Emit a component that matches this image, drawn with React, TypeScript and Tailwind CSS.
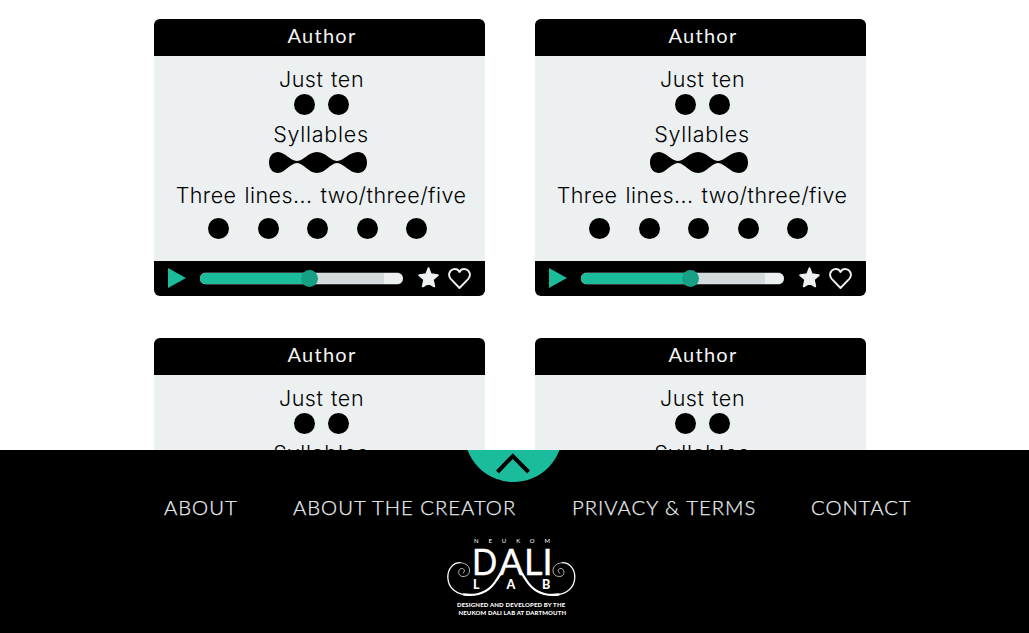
const cards = [0, 1, 2, 3];
const tiny = "absolute whitespace-nowrap leading-none";

function Dots({ count, gap }: { count: number; gap: string }) {
  return (
    <div className={`flex ${gap}`}>
      {Array.from({ length: count }, (_, i) => (
        <span key={i} className="size-[21px] rounded-full bg-black" />
      ))}
    </div>
  );
}

function Player() {
  return (
    <div className="flex h-[35px] items-start bg-black pl-[14px] pr-[13px]">
      <svg className="mt-[7px] h-5 w-[18px] shrink-0" viewBox="0 0 18 20" fill="#1abc9c">
        <path d="M0 0 18 10 0 20Z" />
      </svg>
      <div className="relative ml-[14px] mt-[12px] flex h-[11px] w-[203px] shrink-0 rounded-[6px] bg-[#ecf0f1] shadow-[0_1px_0_-0.5px_#777,0_-1px_0_-0.5px_#777]">
        <div className="w-[109px] rounded-l-[6px] bg-[#1abc9c]" />
        <div className="w-[75px] bg-[#d5dbdc]" />
        <span className="absolute -top-[3px] left-[101px] size-[17px] rounded-full bg-[#16a085]" />
      </div>
      <svg className="ml-[15px] mt-[6px] h-[21px] w-[21px] shrink-0" viewBox="0 0 21 21" fill="#ecf0f1" stroke="#ecf0f1" strokeWidth="2" strokeLinejoin="round">
        <path d="M10.500 1.300 12.800 7.300 19.700 8.200 14.700 12.500 16.200 19.300 10.500 15.800 4.800 19.300 6.300 12.500 1.300 8.200 8.200 7.300Z" />
      </svg>
      <svg className="ml-[9px] mt-[7px] h-[21px] w-[23px] shrink-0" viewBox="0 0 23 21" fill="none" stroke="#ecf0f1" strokeWidth="1.900" strokeLinejoin="round">
        <path d="M11.500 20 2.700 10.800C-.4 7.300 1.300 1.800 5.900 1.100 8.300.8 10.500 2 11.500 4 12.500 2 14.700.8 17.100 1.100 21.700 1.800 23.400 7.300 20.300 10.800Z" />
      </svg>
    </div>
  );
}

function Card() {
  return (
    <article className="h-[277px] overflow-hidden rounded-[6px] bg-[#ecf0f1]">
      <h2 className="flex h-[37px] items-center justify-center bg-black pb-[5px] pl-[5px] font-['Lato'] text-[20px] tracking-[1.25px] text-[#f5f5f5]">
        Author
      </h2>
      <div className="flex h-[205px] flex-col items-center pt-[11px] font-['Inter'] text-[21.5px] font-light leading-6 text-black">
        <p className="ml-[4px] tracking-[0.55px] [word-spacing:1px]">Just ten</p>
        <div className="ml-[4px] mt-[3px]"><Dots count={2} gap="gap-[13px]" /></div>
        <p className="ml-[3px] mt-[7px] tracking-[0.75px]">Syllables</p>
        <svg className="mr-[3px] mt-[6px] h-[21px] w-[98px]" viewBox="0 0 98 21">
          <path d="M0 10.500C0 4 4 0 9 0 16 0 21 8.800 28 9.100 35 8.800 39 0 48 0 57 0 61 8.800 68 9.100 75 8.800 80 0 89 0 94 0 98 4 98 10.500 98 17 94 21 89 21 80 21 75 11.400 68 11.100 61 11.400 57 21 48 21 39 21 35 11.400 28 11.100 21 11.400 16 21 9 21 4 21 0 17 0 10.500Z" />
        </svg>
        <p className="ml-[3px] mt-[10px] whitespace-nowrap tracking-[0.45px] [word-spacing:1.5px]">Three lines... two/three/five</p>
        <div className="mr-[4px] mt-[11px]"><Dots count={5} gap="gap-[28.5px]" /></div>
      </div>
      <Player />
    </article>
  );
}

function Logo() {
  return (
    <div className="relative ml-[446px] mt-[18px] h-[80px] w-[130px] font-['Lato'] text-white">
      <svg className="absolute inset-0 size-full" viewBox="0 0 130 80" fill="none" stroke="white" strokeLinecap="round">
        <g id="scroll">
          <path d="M17 36C19.500 35 18.500 31 15.500 31.500 11.500 32 11.500 39.500 17 39.500 21 39.500 24 37 23.500 32.500 23 28 18 25.700 14 25.700" strokeWidth=".7" />
          <path d="M14 25.700C7 25.700 1.800 32 1.800 40 2 51 10 57.500 23 58" strokeWidth="1.300" />
          <path d="M18 57.500C36 60 45 52 50.500 43L54.600 36.700" strokeWidth="2.300" />
        </g>
        <use href="#scroll" transform="matrix(-1 0 0 1 130.600 0)" />
      </svg>
      <span className={`${tiny} left-[28px] top-[1px] text-[6px] tracking-[9.900px]`}>NEUKOM</span>
      <span className={`${tiny} left-[25.500px] top-[6px] origin-left scale-x-[.92] text-[36px] [-webkit-text-stroke:.4px_white]`}>D</span>
      <span className={`${tiny} left-[53px] top-[6px] text-[36px] [-webkit-text-stroke:.4px_white]`}>A</span>
      <span className={`${tiny} left-[78px] top-[6px] text-[36px] [-webkit-text-stroke:.4px_white]`}>L</span>
      <span className={`${tiny} left-[96.500px] top-[6px] text-[36px] [-webkit-text-stroke:.4px_white]`}>I</span>
      <span className={`${tiny} left-[27px] top-[42px] text-[12.500px] font-black`}>L</span>
      <span className={`${tiny} left-[60.500px] top-[42px] text-[12.500px] font-black`}>A</span>
      <span className={`${tiny} left-[96px] top-[42px] text-[12.500px] font-black`}>B</span>
      <span className={`${tiny} left-[11px] top-[65px] text-[6px] font-black tracking-[.17px]`}>DESIGNED AND DEVELOPED BY THE</span>
      <span className={`${tiny} left-[12.500px] top-[73px] text-[6px] font-black tracking-[.13px]`}>NEUKOM DALI LAB AT DARTMOUTH</span>
    </div>
  );
}

export default function App() {
  return (
    <div className="flex h-[633px] w-[1029px] flex-col overflow-hidden bg-white">
      <main className="grid h-[450px] shrink-0 grid-cols-[331px_331px] content-start gap-x-[50px] gap-y-[42px] overflow-hidden pl-[154px] pt-[19px]">
        {cards.map((i) => <Card key={i} />)}
      </main>
      <footer className="h-[183px] bg-black">
        <button className="ml-[464px] flex h-[32px] w-[99px] items-end justify-center overflow-hidden" aria-label="Collapse footer">
          <svg className="h-[32px] w-[99px]" viewBox="0 0 99 32">
            <circle cx="49.500" cy="-17" r="49" fill="#1abc9c" />
            <path d="M33.500 22 48.800 6 64.500 22" fill="none" stroke="black" strokeWidth="4" />
          </svg>
        </button>
        <nav className="mt-[13px] flex h-6 pl-[164px] font-['Lato'] text-[20.300px] font-light leading-6 tracking-[1px] text-[#ecf0f1] [-webkit-text-stroke:0.25px_#ecf0f1]">
          <a className="w-[129px] whitespace-nowrap">ABOUT</a>
          <a className="w-[279px] whitespace-nowrap">ABOUT THE CREATOR</a>
          <a className="w-[239px] whitespace-nowrap">PRIVACY &amp; TERMS</a>
          <a className="whitespace-nowrap">CONTACT</a>
        </nav>
        <Logo />
      </footer>
    </div>
  );
}
